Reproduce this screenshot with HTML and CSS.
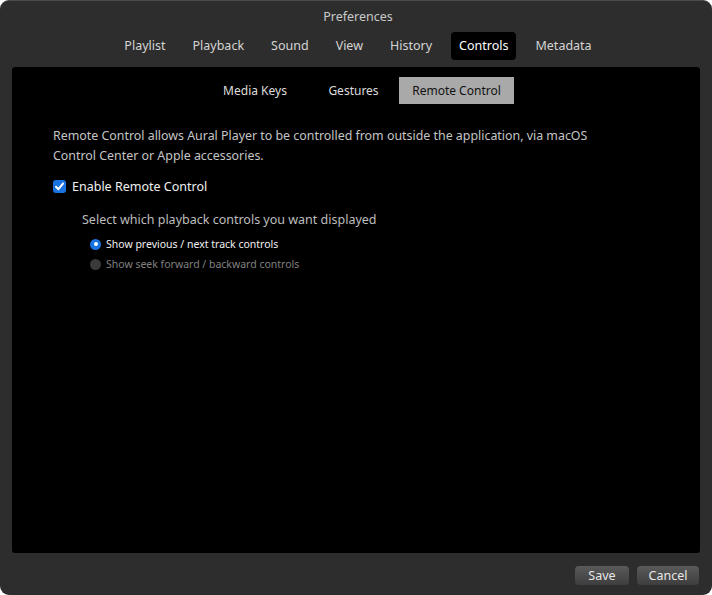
FILE: index.html
```html
<!DOCTYPE html>
<html>
<head>
<meta charset="utf-8">
<link rel="stylesheet" href="styles.css">
</head>
<body>
<div class="window">
  <div class="title">Preferences</div>
  <div class="tabs">
    <span class="tab">Playlist</span>
    <span class="tab">Playback</span>
    <span class="tab">Sound</span>
    <span class="tab">View</span>
    <span class="tab">History</span>
    <span class="tab active">Controls</span>
    <span class="tab">Metadata</span>
  </div>
  <div class="panel">
    <div class="subtabs">
      <span class="subtab mk">Media Keys</span>
      <span class="subtab ge">Gestures</span>
      <span class="subtab rc active">Remote Control</span>
    </div>
    <p class="desc">Remote Control allows Aural Player to be controlled from outside the application, via macOS<br>Control Center or Apple accessories.</p>
    <div class="check-row">
      <span class="checkbox"><svg width="13" height="13" viewBox="0 0 13 13"><path d="M3 6.8 L5.4 9.2 L10 3.6" fill="none" stroke="#fff" stroke-width="2" stroke-linecap="round" stroke-linejoin="round"/></svg></span>
      <span class="check-label">Enable Remote Control</span>
    </div>
    <div class="select-label">Select which playback controls you want displayed</div>
    <div class="radios">
      <div class="radio-row"><span class="radio on"></span><span class="radio-label on">Show previous / next track controls</span></div>
      <div class="radio-row"><span class="radio"></span><span class="radio-label">Show seek forward / backward controls</span></div>
    </div>
  </div>
  <div class="footer">
    <button class="btn save">Save</button>
    <button class="btn cancel">Cancel</button>
  </div>
</div>
</body>
</html>
```
FILE: styles.css
```css
html, body { margin: 0; padding: 0; background: #fff; }
body { font-family: "Noto Sans", "DejaVu Sans", sans-serif; }
.window {
  width: 712px; height: 595px; box-sizing: border-box;
  background: #2d2d2d; border-radius: 9px;
  border-top: 1px solid #4a4a4a;
  display: flex; flex-direction: column;
  padding: 0 12px;
}
.title {
  color: #c9c9c9; font-size: 12.5px; text-align: center;
  height: 30px; line-height: 30px; padding: 1px 0 0 4px;
}
.tabs {
  display: flex; justify-content: center; gap: 11px;
  height: 28px; padding-left: 4px;
}
.tab {
  color: #d4d4d4; font-size: 12.5px; line-height: 28px;
  padding: 0 8px; border-radius: 4px;
}
.tab.active { background: #000; color: #fff; }
.panel {
  margin-top: 7px; height: 486px; background: #000; border-radius: 3px;
  box-sizing: border-box; padding: 10px 0 0 41px;
}
.subtabs {
  display: flex; height: 27px; margin-left: -41px; padding-left: 199px;
}
.subtab {
  color: #dcdcdc; font-size: 12px; line-height: 27px; text-align: center;
}
.mk { width: 88px; }
.ge { width: 75px; margin-left: 17px; }
.rc { width: 115px; margin-left: 8px; }
.subtab.active { background: #a9a9a9; color: #111; }
.desc {
  margin: 22px 0 0; color: #c4c4c4; font-size: 12.4px; line-height: 20px;
}
.check-row { display: flex; align-items: center; margin-top: 11px; height: 18px; }
.checkbox {
  width: 13px; height: 13px; border-radius: 3px; background: #1a73e0;
  display: inline-flex; margin-right: 6px;
}
.check-label { color: #f0f0f0; font-size: 12.5px; }
.select-label { color: #bdbdbd; font-size: 12.5px; margin: 16px 0 0 29px; line-height: 17px; }
.radios { margin: 6px 0 0 37px; }
.radio-row { display: flex; align-items: center; height: 20px; }
.radio {
  width: 11px; height: 11px; border-radius: 50%; background: #3a3a3a;
  box-sizing: border-box; margin-right: 5px; position: relative;
}
.radio.on { background: #1a73e0; }
.radio.on::after {
  content: ""; position: absolute; left: 3.5px; top: 3.5px; width: 4px; height: 4px;
  border-radius: 50%; background: #fff;
}
.radio-label { color: #808080; font-size: 10.5px; }
.radio-label.on { color: #f0f0f0; }
.footer {
  display: flex; justify-content: flex-end; gap: 8px; margin-top: 13px; padding-right: 1px;
}
.btn {
  font-family: inherit; font-size: 12.5px; color: #e8e8e8;
  background: linear-gradient(#5a5a5a, #3e3e3e); border: none; border-radius: 4px;
  height: 19px; padding: 0; line-height: 19px;
}
.save { width: 54px; }
.cancel { width: 62px; }
```
